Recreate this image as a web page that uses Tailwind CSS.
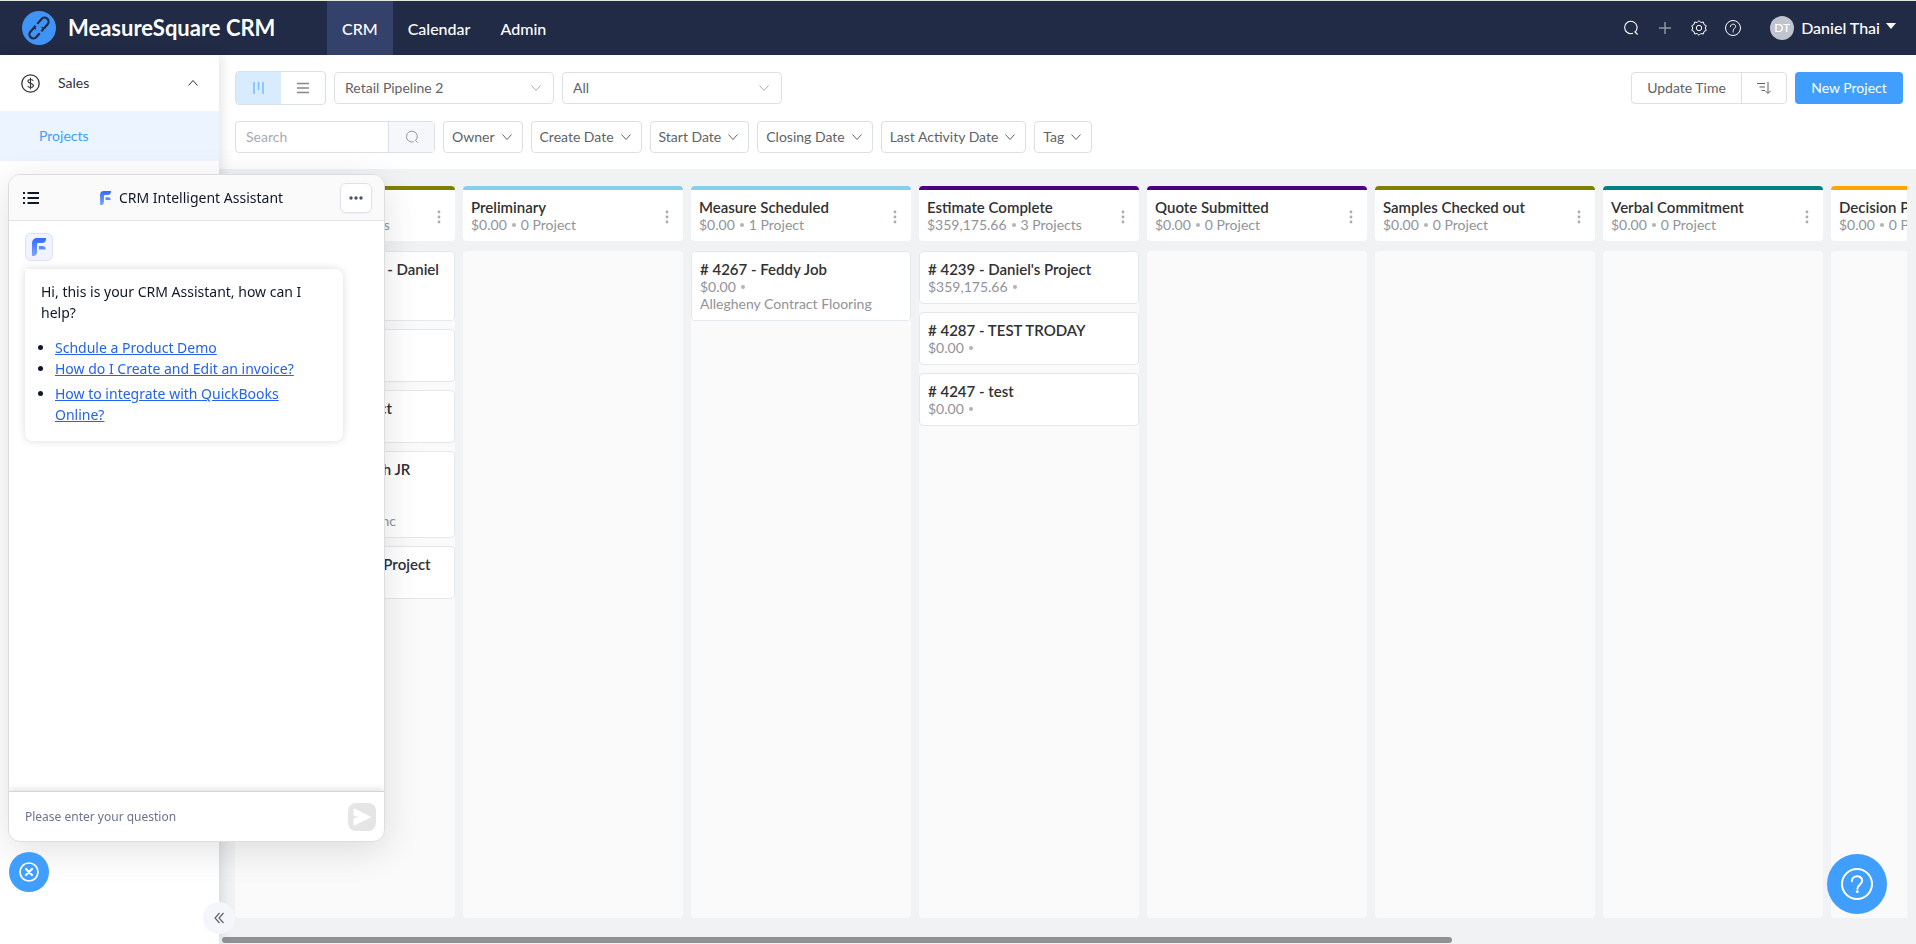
<!DOCTYPE html>
<html lang="en">
<head>
  <meta charset="UTF-8" />
  <meta name="viewport" content="width=device-width, initial-scale=1.0" />
  <title>MeasureSquare CRM</title>
  <script src="https://cdn.jsdelivr.net/npm/@tailwindcss/browser@4"></script>
</head>
<body class="h-screen flex flex-col overflow-hidden bg-white font-['Lato','Liberation_Sans',sans-serif] text-sm text-[#606266]">

  <!-- icons shared by several controls -->
  <svg class="absolute w-0 h-0" aria-hidden="true">
    <symbol id="chevron" viewBox="0 0 14 14"><path d="M2.5 4.5 7 9.5l4.5-5" fill="none" stroke="currentColor" /></symbol>
    <symbol id="search" viewBox="0 0 16 16"><path d="M10 13.300A6.200 6.200 0 1 1 12.300 11.800M11.600 11.500l3 3" fill="none" stroke="currentColor" stroke-width="1.100" /></symbol>
    <symbol id="help" viewBox="0 0 32 32"><circle cx="16" cy="16" r="15" fill="none" stroke="currentColor" stroke-width="2" /><path d="M10.900 13.200c0-6.600 10.300-6.400 10.300-.4 0 3.400-4.800 4-4.800 8" fill="none" stroke="currentColor" stroke-width="2" stroke-linecap="round" /><circle cx="16.300" cy="23.700" r="1.400" fill="currentColor" /></symbol>
    <symbol id="dots" viewBox="0 0 4 14"><circle cx="2" cy="2" r="1.400" fill="currentColor" /><circle cx="2" cy="7" r="1.400" fill="currentColor" /><circle cx="2" cy="12" r="1.400" fill="currentColor" /></symbol>
    <linearGradient id="blue" x1="0" y1="0" x2="0" y2="1"><stop offset="0" stop-color="#2f6bff" /><stop offset="1" stop-color="#7ea6ff" /></linearGradient>
    <symbol id="fmark" viewBox="0 0 14 18"><path d="M0 18V5a5 5 0 0 1 5-5h9v1a4 4 0 0 1-4 4H6a1 1 0 0 0-1 1v8a4 4 0 0 1-4 4z" fill="url(#blue)" /><path d="M7 8h3a3 3 0 0 1 3.500 3.500H7z" fill="#5c8bff" /></symbol>
  </svg>

  <header class="h-[55px] shrink-0 flex items-center border-t border-[#e2e8e0] bg-[#222b45] text-white">
    <div class="w-[327px] flex items-center pl-[22px] gap-3">
      <svg class="w-[34px] h-[34px]" viewBox="0 0 34 34">
        <circle cx="17" cy="17" r="17" fill="#4094f7" />
        <g transform="rotate(41 17 17)" fill="none" stroke="#222b45" stroke-width="2.200">
          <path d="M13 15V8.500a4 4 0 0 1 8 0v9.500M21 20.500v5a4 4 0 0 1-8 0v-8" />
          <path d="M21 14.500h-2.500M13 20h2.500" stroke-width="1.400" />
        </g>
      </svg>
      <h1 class="text-[22px] font-bold whitespace-nowrap">MeasureSquare CRM</h1>
    </div>
    <nav class="h-full flex items-center text-base font-medium">
      <a href="#" class="h-full flex items-center px-[15px] pt-0.5 bg-[#34416b]">CRM</a>
      <a href="#" class="h-full flex items-center px-[15px] pt-0.5">Calendar</a>
      <a href="#" class="h-full flex items-center px-[15px] pt-0.5">Admin</a>
    </nav>
    <div class="ml-auto flex items-center gap-[18px] pr-5">
      <button aria-label="Search"><svg class="w-4 h-4"><use href="#search" /></svg></button>
      <button aria-label="Add" class="text-[#9195a2]"><svg class="w-4 h-4" viewBox="0 0 16 16"><path d="M8 2v12M2 8h12" stroke="currentColor" stroke-width="1.500" /></svg></button>
      <button aria-label="Settings"><svg class="w-4 h-4" viewBox="0 0 16 16" fill="none" stroke="currentColor"><path d="M8 .7 9.800 2.500 12.400 2l.6 2.500 2.300 1.300L14.200 8l1.100 2.300L13 11.500l-.6 2.500-2.600-.5L8 15.300 6.200 13.500 3.600 14 3 11.500.7 10.300 1.800 8 .7 5.800 3 4.500 3.600 2l2.600.5z" stroke-linejoin="round" /><circle cx="8" cy="8" r="2.700" /></svg></button>
      <button aria-label="Help"><svg class="w-4 h-4"><use href="#help" /></svg></button>
      <button class="flex items-center ml-[11px] text-base font-medium">
        <span class="w-6 h-6 rounded-full bg-[#c0c4cc] text-xs flex items-center justify-center mr-[7px]">DT</span>
        Daniel Thai
        <svg class="w-[10px] h-[6px] ml-1.5 mb-1" viewBox="0 0 10 6"><path d="M0 0h10L5 6z" fill="currentColor" /></svg>
      </button>
    </div>
  </header>

  <div class="flex-1 min-h-0 flex">
    <aside class="relative z-10 w-[219px] shrink-0 bg-white shadow-[2px_0_12px_rgba(0,0,0,0.12)]">
      <button class="w-full h-14 flex items-center pl-[21px] pr-[19px] text-[#303133]">
        <svg class="w-[19px] h-[19px] mr-[18px]" viewBox="0 0 19 19" fill="none" stroke="currentColor" stroke-width="1.300"><circle cx="9.500" cy="9.500" r="8.700" /><path d="M12.200 6.800c-.8-1.800-5.300-1.800-5.300.5 0 2.600 5.500 1.600 5.500 4.300 0 2.400-4.900 2.400-5.700.3M9.500 3.800v11.400" stroke-width="1.100" /></svg>
        Sales
        <svg class="w-3.5 h-3.5 ml-auto rotate-180"><use href="#chevron" /></svg>
      </button>
      <a href="#" class="h-[50px] flex items-center pl-[39px] bg-[#ecf5ff] text-[#409eff]">Projects</a>
      <button aria-label="Collapse menu" class="absolute right-[-16px] bottom-[10px] w-8 h-8 rounded-full bg-[#f4f6fb] flex items-center justify-center">
        <svg class="w-3 h-3" viewBox="0 0 12 12" fill="none" stroke="#606266" stroke-width="1.200"><path d="M6.500 1 2 6l4.500 5M10.500 1 6 6l4.500 5" /></svg>
      </button>
    </aside>

    <main class="flex-1 min-w-0 flex flex-col">
      <div class="flex items-center gap-2 pl-4 pr-[13px] pt-4">
        <div class="flex h-[34px] w-[91px] rounded border border-[#dcdfe6] overflow-hidden">
          <button aria-label="Board view" class="w-[45px] bg-[#d9ecff] flex items-center justify-center"><svg class="w-3 h-3" viewBox="0 0 12 12" fill="none" stroke="#79bbff" stroke-width="1.500"><path d="M1 0v12M5.500 0v8M10 0v12" /></svg></button>
          <button aria-label="List view" class="flex-1 flex items-center justify-center"><svg class="w-3 h-3" viewBox="0 0 12 12" fill="none" stroke="#85878c" stroke-width="1.600"><path d="M0 1.500h12M0 6h12M0 10.500h12" /></svg></button>
        </div>
        <div class="relative w-[220px] h-8">
          <select aria-label="Pipeline" class="appearance-none w-full h-full rounded border border-[#dcdfe6] bg-white pl-2.5 pr-8"><option>Retail Pipeline 2</option></select>
          <svg class="absolute right-[11px] top-[9px] w-3.5 h-3.5 text-[#a8abb2] pointer-events-none"><use href="#chevron" /></svg>
        </div>
        <div class="relative w-[220px] h-8">
          <select aria-label="Filter" class="appearance-none w-full h-full rounded border border-[#dcdfe6] bg-white pl-2.5 pr-8"><option>All</option></select>
          <svg class="absolute right-[11px] top-[9px] w-3.5 h-3.5 text-[#a8abb2] pointer-events-none"><use href="#chevron" /></svg>
        </div>
        <div class="ml-auto flex h-8 rounded border border-[#dcdfe6]">
          <button class="w-[109px]">Update Time</button>
          <button aria-label="Sort order" class="w-[45px] border-l border-[#dcdfe6] flex items-center justify-center"><svg class="w-3.5 h-3" viewBox="0 0 14 12" fill="none" stroke="#606266"><path d="M0 1.500h8M2.500 5h5.500M4.500 8.500H8M11 0v11M8.500 9l2.500 2.500L13.500 9" /></svg></button>
        </div>
        <button class="w-[108px] h-8 rounded bg-[#409eff] text-white">New Project</button>
      </div>

      <div class="flex items-center gap-2 pl-4 h-16">
        <div class="flex w-[200px] h-8 rounded border border-[#dcdfe6]">
          <input type="text" aria-label="Search" placeholder="Search" class="w-[152px] pl-2.5 outline-none placeholder-[#a8abb2]" />
          <button aria-label="Run search" class="flex-1 border-l border-[#dcdfe6] bg-[#f5f7fa] text-[#909399] flex items-center justify-center"><svg class="w-3.5 h-3.5"><use href="#search" /></svg></button>
        </div>
        <button class="h-8 flex items-center gap-[5px] px-2 rounded border border-[#dcdfe6]">Owner <svg class="w-3.5 h-3.5"><use href="#chevron" /></svg></button>
        <button class="h-8 flex items-center gap-[5px] px-2 rounded border border-[#dcdfe6]">Create Date <svg class="w-3.5 h-3.5"><use href="#chevron" /></svg></button>
        <button class="h-8 flex items-center gap-[5px] px-2 rounded border border-[#dcdfe6]">Start Date <svg class="w-3.5 h-3.5"><use href="#chevron" /></svg></button>
        <button class="h-8 flex items-center gap-[5px] px-2 rounded border border-[#dcdfe6]">Closing Date <svg class="w-3.5 h-3.5"><use href="#chevron" /></svg></button>
        <button class="h-8 flex items-center gap-[5px] px-2 rounded border border-[#dcdfe6]">Last Activity Date <svg class="w-3.5 h-3.5"><use href="#chevron" /></svg></button>
        <button class="h-8 flex items-center gap-[5px] px-2 rounded border border-[#dcdfe6]">Tag <svg class="w-3.5 h-3.5"><use href="#chevron" /></svg></button>
      </div>

      <div class="flex-1 min-h-0 flex flex-col bg-[#f1f2f4] pt-[17px]">
        <div id="board" class="flex-1 min-h-0 flex gap-2 ml-4 mr-[9px] overflow-hidden leading-[17px]"></div>
        <div class="h-[26px] shrink-0 mr-[9px] flex items-end pl-[3px] pb-px">
          <div class="w-[73%] h-1.5 rounded-full bg-[#909193]"></div>
        </div>
      </div>
    </main>
  </div>

  <!-- chat assistant -->
  <section class="fixed z-20 left-2 top-[174px] bottom-[102px] w-[377px] flex flex-col rounded-xl border border-[#dcdddf] bg-white overflow-hidden shadow-[0_8px_36px_rgba(0,0,0,0.12)] font-['Noto_Sans',sans-serif] text-[#101828]">
    <div class="h-[46px] shrink-0 flex items-center justify-between pl-3.5 pr-3 bg-[#fafafa] border-b border-[#e4e4e7]">
      <button aria-label="Conversations"><svg class="w-4 h-3" viewBox="0 0 16 12" fill="none" stroke="currentColor" stroke-width="2"><path d="M0 1h2M0 6h2M0 11h2M4.500 1H16M4.500 6H16M4.500 11H16" /></svg></button>
      <h2 class="flex items-center gap-2 pl-1"><svg class="w-[11px] h-3.5"><use href="#fmark" /></svg>CRM Intelligent Assistant</h2>
      <button aria-label="More" class="w-8 h-[30px] rounded-md border border-[#dfe2ee] bg-white shadow-xs flex items-center justify-center"><svg class="w-3.5 h-1" viewBox="0 0 14 4" fill="#475467"><circle cx="2" cy="2" r="1.700" /><circle cx="7" cy="2" r="1.700" /><circle cx="12" cy="2" r="1.700" /></svg></button>
    </div>
    <div class="flex-1 min-h-0 px-4 pt-3">
      <div class="w-7 h-7 rounded-md border border-[#dbe2f3] bg-[#eff4ff] flex items-center justify-center"><svg class="w-3.5 h-[18px]"><use href="#fmark" /></svg></div>
      <div class="mt-2 w-[318px] rounded-lg rounded-tl-none bg-white px-4 pt-3 pb-4 shadow-[0_0_8px_rgba(0,0,0,0.14)] leading-[21px]">
        <p>Hi, this is your CRM Assistant, how can I help?</p>
        <ul class="list-disc pl-3.5 mt-3.5 text-[#2563eb]">
          <li class="marker:text-[#101828]"><a href="#" class="underline">Schdule a Product Demo</a></li>
          <li class="marker:text-[#101828]"><a href="#" class="underline">How do I Create and Edit an invoice?</a></li>
          <li class="marker:text-[#101828] mt-1"><a href="#" class="underline">How to integrate with QuickBooks Online?</a></li>
        </ul>
      </div>
    </div>
    <form class="h-[50px] shrink-0 flex items-center pl-4 pr-2 border-t border-[#d5d5d5] shadow-[0_-2px_6px_rgba(0,0,0,0.12)]">
      <input type="text" aria-label="Question" placeholder="Please enter your question" class="flex-1 text-xs outline-none placeholder-[#6b7491]" />
      <button type="button" aria-label="Send" class="w-7 h-7 rounded-lg bg-[#e5e5e5] flex items-center justify-center"><svg class="w-[18px] h-[18px]" viewBox="0 0 18 18"><path d="M1 .8 17.500 9 1 17.200V10.500L9.500 9 1 7.500z" fill="#fff" stroke="#fff" stroke-linejoin="round" /></svg></button>
    </form>
  </section>

  <button aria-label="Close assistant" class="fixed z-20 left-[9px] bottom-[52px] w-10 h-10 rounded-full bg-[#409eff] flex items-center justify-center">
    <svg class="w-5 h-5" viewBox="0 0 20 20" fill="none" stroke="#fff" stroke-width="1.700"><circle cx="10" cy="10" r="9" /><path d="m7 7 6 6M13 7l-6 6" stroke-width="2.200" stroke-linecap="round" /></svg>
  </button>
  <button aria-label="Help center" class="fixed z-20 right-[29px] bottom-[30px] w-[60px] h-[60px] rounded-full bg-[#409eff] text-white flex items-center justify-center">
    <svg class="w-8 h-8"><use href="#help" /></svg>
  </button>

  <script>
    const columns = [
      { name: "New Lead", info: ["$12,450.00", "5 Projects"], color: "#808000", cards: [
        ["# 4251 - East Project - Daniel", "$12,450.00", "Daniel East"],
        ["# 4255 - Demo", "$0.00"],
        ["# 4260 - Hotel Project", "$0.00"],
        ["# 4262 - Steven Smith JR", "$0.00", "Steven Smith", "Smith Home Flooring Inc"],
        ["# 4265 - Warehouse Project", "$0.00"],
      ] },
      { name: "Preliminary", info: ["$0.00", "0 Project"], color: "#87ceeb", cards: [] },
      { name: "Measure Scheduled", info: ["$0.00", "1 Project"], color: "#87ceeb", cards: [
        ["# 4267 - Feddy Job", "$0.00", "Allegheny Contract Flooring"],
      ] },
      { name: "Estimate Complete", info: ["$359,175.66", "3 Projects"], color: "#4b0082", cards: [
        ["# 4239 - Daniel's Project", "$359,175.66"],
        ["# 4287 - TEST TRODAY", "$0.00"],
        ["# 4247 - test", "$0.00"],
      ] },
      { name: "Quote Submitted", info: ["$0.00", "0 Project"], color: "#4b0082", cards: [] },
      { name: "Samples Checked out", info: ["$0.00", "0 Project"], color: "#808000", cards: [] },
      { name: "Verbal Commitment", info: ["$0.00", "0 Project"], color: "#008080", cards: [] },
      { name: "Decision Pending", info: ["$0.00", "0 Project"], color: "#ffa500", cards: [] },
    ];

    const dot = `<span class="w-1 h-1 rounded-full bg-[#b1b3b8]"></span>`;

    function card([title, price, ...lines]) {
      return `<article class="rounded border border-[#e4e7ed] bg-white px-2 pt-[9px] pb-2">
        <h3 class="text-[15px] leading-[17px] font-semibold text-[#303133] truncate">${title}</h3>
        <p class="flex items-center gap-[5px]">${price}${dot}</p>
        ${lines.map(l => `<p class="truncate">${l}</p>`).join("")}
      </article>`;
    }

    document.getElementById("board").innerHTML = columns.map(c => `
      <section class="w-[220px] shrink-0 flex flex-col text-[#909399]">
        <header class="h-[55px] shrink-0 flex justify-between rounded border-t-4 bg-white pl-2 pr-3.5 pt-[9px]" style="border-color: ${c.color}">
          <div>
            <h2 class="text-[15px] leading-[17px] font-semibold text-[#303133]">${c.name}</h2>
            <p class="flex items-center gap-[5px]">${c.info[0]}${dot}${c.info[1]}</p>
          </div>
          <button aria-label="Column menu" class="self-start pt-[11px] text-[#a8abb2]"><svg class="w-1 h-3.5"><use href="#dots" /></svg></button>
        </header>
        <div class="mt-[10px] flex-1 rounded bg-[#fafafa] flex flex-col gap-2">${c.cards.map(card).join("")}</div>
      </section>`).join("");
  </script>
</body>
</html>
